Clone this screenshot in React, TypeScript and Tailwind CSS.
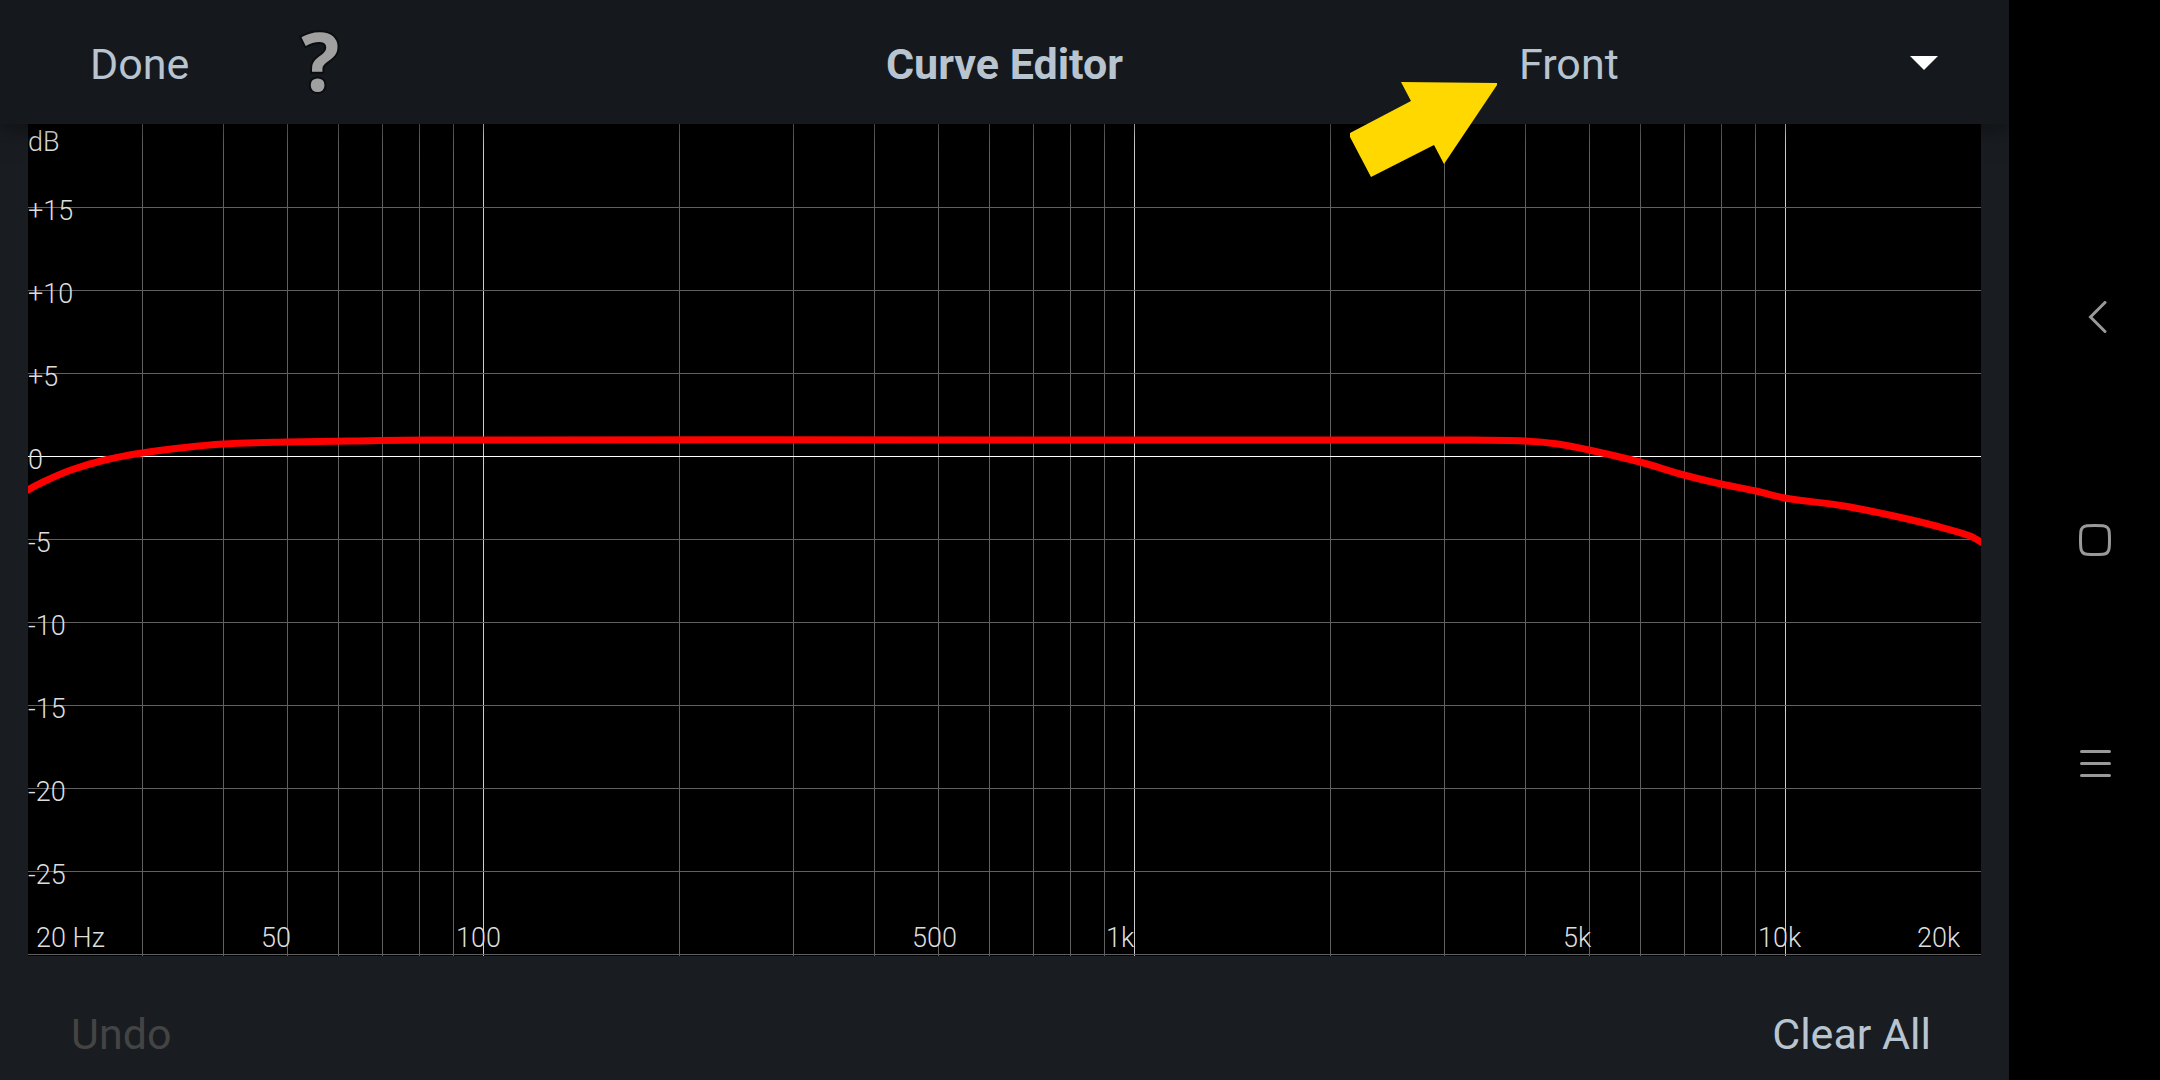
import { useState } from "react";

const WIDTH = 1953;
const HEIGHT = 832;
const DECADE = 651;
const ZERO_Y = 332;
const PX_PER_5DB = 83;

const channels = ["Front", "Rear", "Subwoofer"];

const frequencies = [
  30, 40, 50, 60, 70, 80, 90, 100, 200, 300, 400, 500, 600, 700, 800, 900, 1000,
  2000, 3000, 4000, 5000, 6000, 7000, 8000, 9000, 10000,
];

const levels = [15, 10, 5, 0, -5, -10, -15, -20, -25, -30];

const frequencyLabels = [
  { text: "20 Hz", x: 8 },
  { text: "50", x: 233 },
  { text: "100", x: 428 },
  { text: "500", x: 884 },
  { text: "1k", x: 1078 },
  { text: "5k", x: 1535 },
  { text: "10k", x: 1730 },
  { text: "20k", x: 1889 },
];

const curve = [
  [-4, 368],
  [15, 358],
  [43, 346],
  [77, 336],
  [114, 329],
  [152, 324],
  [195, 320],
  [259, 318],
  [320, 317],
  [400, 316],
  [1300, 316],
  [1440, 316],
  [1497, 317],
  [1530, 320],
  [1561, 326],
  [1612, 338],
  [1656, 351],
  [1693, 360],
  [1728, 367],
  [1757, 374],
  [1816, 382],
  [1866, 392],
  [1908, 402],
  [1942, 412],
  [1958, 421],
];

function frequencyX(hz: number) {
  return Math.floor(DECADE * Math.log10(hz / 20));
}

function levelY(db: number) {
  return ZERO_Y - (db / 5) * PX_PER_5DB;
}

// Catmull-Rom spline through the points, written as cubic beziers
function smoothPath(points: number[][]) {
  let d = `M${points[0][0]} ${points[0][1]}`;
  for (let i = 0; i < points.length - 1; i++) {
    const prev = points[i - 1] ?? points[i];
    const from = points[i];
    const to = points[i + 1];
    const next = points[i + 2] ?? to;
    const span = to[0] - from[0];
    const slopeFrom = (to[1] - prev[1]) / (to[0] - prev[0]);
    const slopeTo = (next[1] - from[1]) / (next[0] - from[0]);
    d += ` C${from[0] + span / 3} ${from[1] + (slopeFrom * span) / 3}`;
    d += ` ${to[0] - span / 3} ${to[1] - (slopeTo * span) / 3}`;
    d += ` ${to[0]} ${to[1]}`;
  }
  return d;
}

function CurveChart() {
  return (
    <svg
      viewBox={`0 0 ${WIDTH} ${HEIGHT}`}
      className="block w-full bg-black"
      role="img"
      aria-label="Frequency response curve"
    >
      <g shapeRendering="crispEdges">
        {frequencies.map((hz) => (
          <rect
            key={hz}
            x={frequencyX(hz)}
            y="0"
            width="1"
            height={HEIGHT}
            fill={[100, 1000, 10000].includes(hz) ? "#cccccc" : "#606060"}
          />
        ))}
        {levels.map((db) => (
          <rect
            key={db}
            x="0"
            y={levelY(db)}
            width={WIDTH}
            height="1"
            fill={db === 0 ? "#ffffff" : "#606060"}
          />
        ))}
      </g>
      <g fill="#dddddd" fontSize="27" className="font-light">
        <text x="0" y="27">
          dB
        </text>
        {levels.slice(0, -1).map((db) => (
          <text key={db} x="0" y={levelY(db) + 13}>
            {db > 0 ? `+${db}` : db}
          </text>
        ))}
        {frequencyLabels.map((label) => (
          <text key={label.text} x={label.x} y="823">
            {label.text}
          </text>
        ))}
      </g>
      <path d={smoothPath(curve)} fill="none" stroke="#ff0000" strokeWidth="7" />
    </svg>
  );
}

function ChannelSelect() {
  const [channel, setChannel] = useState("Front");

  return (
    <div className="relative mr-14 w-[434px] justify-self-end">
      <select
        aria-label="Channel"
        value={channel}
        onChange={(e) => setChannel(e.target.value)}
        className="h-20 w-full cursor-pointer appearance-none bg-transparent"
      >
        {channels.map((name) => (
          <option key={name}>{name}</option>
        ))}
      </select>
      <svg
        viewBox="0 0 28 14"
        className="pointer-events-none absolute top-8 right-[15px] w-7"
      >
        <path d="M0 0H28L14 14Z" fill="#ffffff" />
      </svg>
      <svg
        viewBox="0 0 147 95"
        className="pointer-events-none absolute top-[58px] right-full mr-[22px] w-[147px]"
      >
        <path
          d="M51 0L147 1V3L94 82L84 63L21 95L0 55V51L61 19Z"
          fill="#ffd800"
        />
      </svg>
    </div>
  );
}

function SystemNav() {
  return (
    <nav className="flex w-[151px] shrink-0 flex-col items-center justify-center gap-[127px] bg-black pl-5">
      <button aria-label="Back" className="grid size-24 place-items-center">
        <svg viewBox="0 0 32 32" className="size-8" fill="none">
          <path
            d="M26 1.5L11.5 16L26 30.5"
            stroke="#999999"
            strokeWidth="3"
            strokeLinecap="round"
          />
        </svg>
      </button>
      <button aria-label="Home" className="grid size-24 place-items-center">
        <svg viewBox="0 0 32 32" className="size-8" fill="none">
          <path
            d="M8 1.8Q16 1.2 24 1.8Q29.6 2.2 30.2 8Q30.8 16 30.2 24Q29.6 29.8 24 30.2Q16 30.8 8 30.2Q2.4 29.8 1.8 24Q1.2 16 1.8 8Q2.4 2.2 8 1.8Z"
            stroke="#999999"
            strokeWidth="3"
          />
        </svg>
      </button>
      <button aria-label="Recents" className="grid size-24 place-items-center">
        <svg viewBox="0 0 32 32" className="size-8" fill="none">
          <path
            d="M2.5 4.5H30.5M2.5 16.5H30.5M2.5 28.5H30.5"
            stroke="#999999"
            strokeWidth="3"
            strokeLinecap="round"
          />
        </svg>
      </button>
    </nav>
  );
}

export default function App() {
  return (
    <div className="flex min-h-screen bg-black font-[Roboto,sans-serif] text-[43px] leading-[50px] text-[#b8c4d0]">
      <main className="flex min-w-0 grow flex-col bg-[#191c20]">
        <header className="relative z-10 grid h-[124px] grid-cols-[1fr_auto_1fr] items-center bg-[#15191d] pt-1 shadow-[0_2px_24px_rgba(0,0,0,0.5)]">
          <div className="flex items-center gap-28 pl-[90px]">
            <button>Done</button>
            <button
              aria-label="Help"
              className="pb-2 font-['Open_Sans',sans-serif] text-[80px] font-bold text-[#a0a0a0] [-webkit-text-stroke:4px_#0c0d0f] [paint-order:stroke]"
            >
              ?
            </button>
          </div>
          <h1 className="font-bold">Curve Editor</h1>
          <ChannelSelect />
        </header>

        <div className="px-7">
          <CurveChart />
        </div>

        <footer className="flex grow items-center justify-between pt-8 pr-[78px] pl-[71px]">
          <button disabled className="text-[#444444]">
            Undo
          </button>
          <button>Clear All</button>
        </footer>
      </main>
      <SystemNav />
    </div>
  );
}
